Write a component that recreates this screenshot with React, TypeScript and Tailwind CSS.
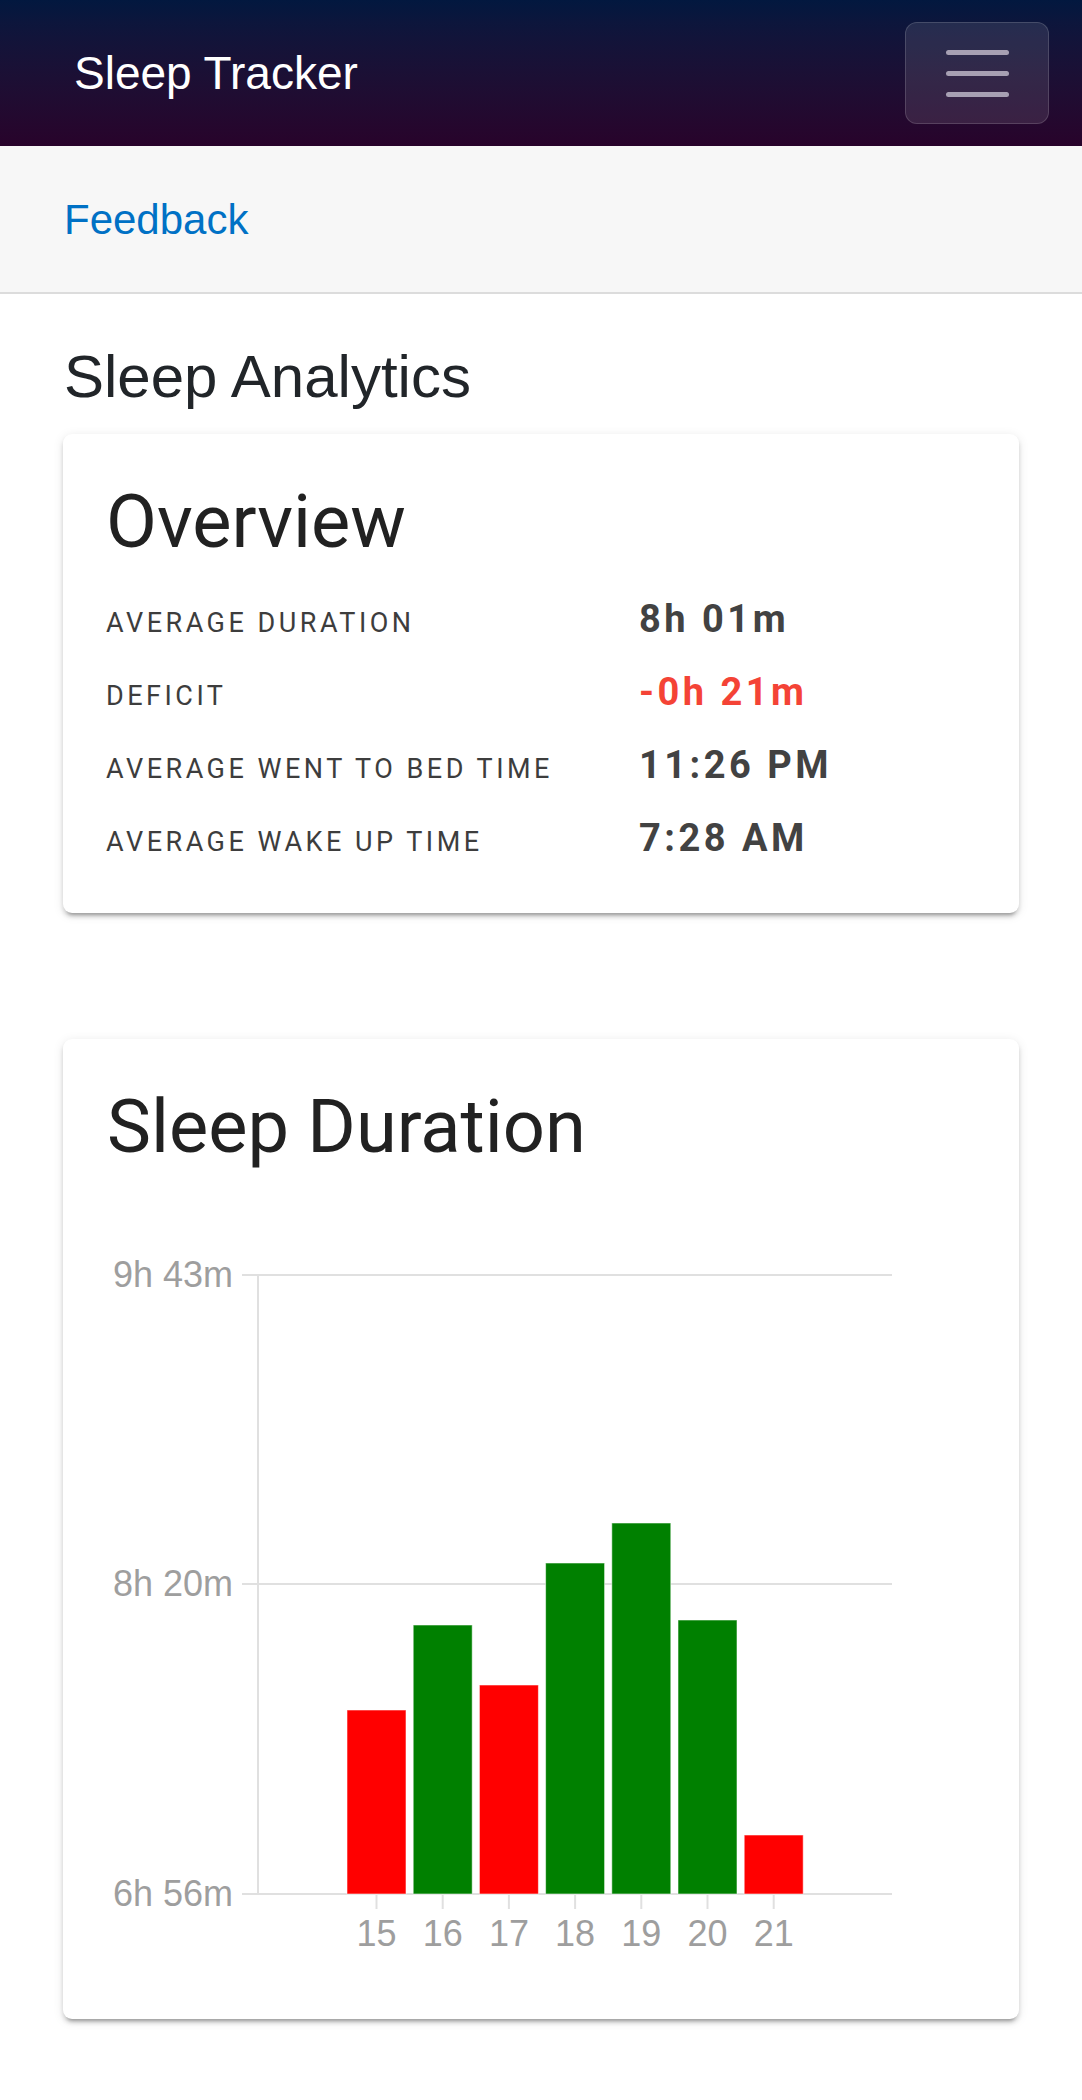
import React from "react";

type Night = { day: number; top: number; short: boolean };

// bar tops in chart coordinates (axis bottom is y=723)
const nights: Night[] = [
  { day: 15, top: 539, short: true },
  { day: 16, top: 454, short: false },
  { day: 17, top: 514, short: true },
  { day: 18, top: 392, short: false },
  { day: 19, top: 352, short: false },
  { day: 20, top: 449, short: false },
  { day: 21, top: 664, short: true },
];

const stats = [
  { label: "Average Duration", value: "8h 01m", bad: false },
  { label: "Deficit", value: "-0h 21m", bad: true },
  { label: "Average went to bed time", value: "11:26 PM", bad: false },
  { label: "Average wake up time", value: "7:28 AM", bad: false },
];

const cardClass =
  "rounded-[9px] bg-white shadow-[0_6px_3px_-4px_rgba(0,0,0,0.22),0_4px_4px_0_rgba(0,0,0,0.14),0_2px_11px_0_rgba(0,0,0,0.1)] font-['Roboto',sans-serif]";

function DurationChart() {
  const gridY = [
    { y: 104, label: "9h 43m" },
    { y: 413, label: "8h 20m" },
    { y: 723, label: "6h 56m" },
  ];
  return (
    <svg width="869" height="804" viewBox="0 0 869 804" className="block">
      {gridY.map((g) => (
        <g key={g.label}>
          <line x1="135" x2="785" y1={g.y} y2={g.y} stroke="#e0e0e0" strokeWidth="2" />
          <text
            x="126"
            y={g.y + 12}
            textAnchor="end"
            fontSize="36"
            fill="#9e9e9e"
            fontFamily="'Liberation Sans', Arial, sans-serif"
          >
            {g.label}
          </text>
        </g>
      ))}
      <line x1="151" x2="151" y1="104" y2="724" stroke="#e0e0e0" strokeWidth="2" />
      {nights.map((n, i) => {
        const x = 240 + i * 66.2;
        const cx = x + 29.5;
        return (
          <g key={n.day}>
            <rect
              x={x}
              y={n.top}
              width="59"
              height={723 - n.top}
              fill={n.short ? "#ff0000" : "#008000"}
              stroke="rgba(255,255,255,0.55)"
              strokeWidth="1"
            />
            <line x1={cx} x2={cx} y1="724" y2="738" stroke="#e0e0e0" strokeWidth="2" />
            <text
              x={cx}
              y="775"
              textAnchor="middle"
              fontSize="36"
              fill="#9e9e9e"
              fontFamily="'Liberation Sans', Arial, sans-serif"
            >
              {n.day}
            </text>
          </g>
        );
      })}
    </svg>
  );
}

export default function App() {
  return (
    <div className="min-h-screen bg-white pb-[80px] font-['Liberation_Sans',Arial,sans-serif]">
      {/* Header */}
      <header className="flex h-[146px] items-center justify-between bg-gradient-to-b from-[#02183f] to-[#28032b] pl-[74px] pr-[33px]">
        <span className="text-[46px] leading-[52px] text-white">Sleep Tracker</span>
        <button className="flex h-[102px] w-[144px] flex-col items-center justify-center gap-[16px] rounded-[12px] border border-white/15 bg-white/10">
          <span className="block h-[5px] w-[63px] rounded-full bg-[#a7a0b3]" />
          <span className="block h-[5px] w-[63px] rounded-full bg-[#a7a0b3]" />
          <span className="block h-[5px] w-[63px] rounded-full bg-[#a7a0b3]" />
        </button>
      </header>

      {/* Nav */}
      <nav className="flex h-[148px] items-center border-b-2 border-[#dcdcdc] bg-[#f7f7f7] pl-[64px] pt-[2px]">
        <a className="text-[42px] leading-[48px] text-[#0071c5]">Feedback</a>
      </nav>

      <main className="px-[63px]">
        <h1 className="mt-[47px] px-[1px] text-[60px] font-normal leading-[72px] text-[#212529]">
          Sleep Analytics
        </h1>

        {/* Overview */}
        <section className={`${cardClass} mt-[21px] pl-[43px] pr-[44px] pt-[44px] pb-[38px]`}>
          <h2 className="text-[74px] leading-[88px] text-[#212121]">Overview</h2>
          <div className="mt-[17px] flex flex-col">
            {stats.map((s) => (
              <div key={s.label} className="flex items-baseline">
                <span className="w-[533px] text-[27px] uppercase tracking-[3.5px] text-[#3d3d3d]">
                  {s.label}
                </span>
                <span
                  className={`text-[38px] font-bold leading-[73px] tracking-[3.5px] ${
                    s.bad ? "text-[#f44336]" : "text-[#424242]"
                  }`}
                >
                  {s.value}
                </span>
              </div>
            ))}
          </div>
        </section>

        {/* Sleep duration */}
        <section className={`${cardClass} mt-[126px] px-[44px] pt-[44px] pb-[44px]`}>
          <h2 className="text-[74px] leading-[88px] text-[#212121]">Sleep Duration</h2>
          <DurationChart />
        </section>
      </main>
    </div>
  );
}
